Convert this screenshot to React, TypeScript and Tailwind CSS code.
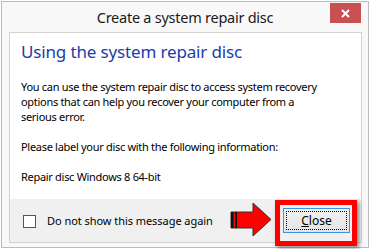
export default function App() {
  const font = { fontFamily: '"Noto Sans", "Open Sans", sans-serif' };
  return (
    <div className="relative w-[370px] h-[249px] bg-white p-px" style={font}>
      <div className="relative flex h-full flex-col border border-[#bcbcbc] bg-[#f8f8f8]">
        <div className="flex h-[30px] items-center justify-center whitespace-nowrap text-[14.5px] leading-none tracking-[-0.25px] text-[#1a1a1a]">
          Create a system repair disc
        </div>
        <div className="absolute right-[7px] top-px flex h-[20px] w-[31px] items-center justify-center bg-[#c75050]">
          <svg width="9" height="9" viewBox="0 0 9 9">
            <path d="M1 1 L8 8 M8 1 L1 8" stroke="white" strokeWidth="2" />
          </svg>
        </div>
        <div className="ml-[7px] flex w-[353px] flex-1 flex-col border border-[#d2d2d2] bg-white">
          <div className="flex-1 px-[11px] pt-[8px]">
            <div className="whitespace-nowrap text-[17px] leading-[22px] tracking-[-0.15px] text-[#1a3da8]">
              Using the system repair disc
            </div>
            <div className="mt-[16px] whitespace-nowrap text-[11px] leading-[15px] tracking-[-0.3px] text-black">
              <p>
                You can use the system repair disc to access system recovery
                <br />
                options that can help you recover your computer from a
                <br />
                serious error.
              </p>
              <p className="mt-[15px]">Please label your disc with the following information:</p>
              <p className="mt-[15px]">Repair disc Windows 8 64-bit</p>
            </div>
          </div>
          <div className="flex h-[43px] items-start bg-[#f0f0f0]">
            <div className="mt-[16px] ml-[13px] h-[13px] w-[13px] border border-[#555] bg-white" />
            <div className="ml-[11px] mt-[14px] whitespace-nowrap text-[11px] leading-[16px] tracking-[-0.05px] text-black">
              Do not show this message again
            </div>
            <div className="ml-auto mr-[11px] mt-[9px] flex h-[25px] w-[67px] items-center justify-center border border-[#3c93e6] bg-gradient-to-b from-[#f2f2f2] to-[#e3e3e3] p-[2px]">
              <div className="flex h-full w-full items-center justify-center border border-dotted border-black text-[12px] leading-none text-black">
                <span>
                  <span className="underline">C</span>lose
                </span>
              </div>
            </div>
          </div>
        </div>
        <div className="h-[4px]" />
      </div>

      <svg className="absolute left-[228px] top-[200px]" width="46" height="40" viewBox="228 200 46 40">
        <polygon
          points="231,212 253,212 253,203 271,219.5 253,236 253,228 231,228"
          fill="#ff0000"
          stroke="#333"
          strokeWidth="1"
          strokeLinejoin="miter"
        />
        <rect x="231" y="212" width="2.5" height="16" fill="#111" />
        <rect x="235" y="212" width="2" height="16" fill="#111" />
      </svg>

      <div className="absolute left-[275px] top-[200px] h-[46px] w-[82px] border-[5px] border-[#ff0000] shadow-[2px_2px_4px_rgba(0,0,0,0.45)]" />
    </div>
  );
}
